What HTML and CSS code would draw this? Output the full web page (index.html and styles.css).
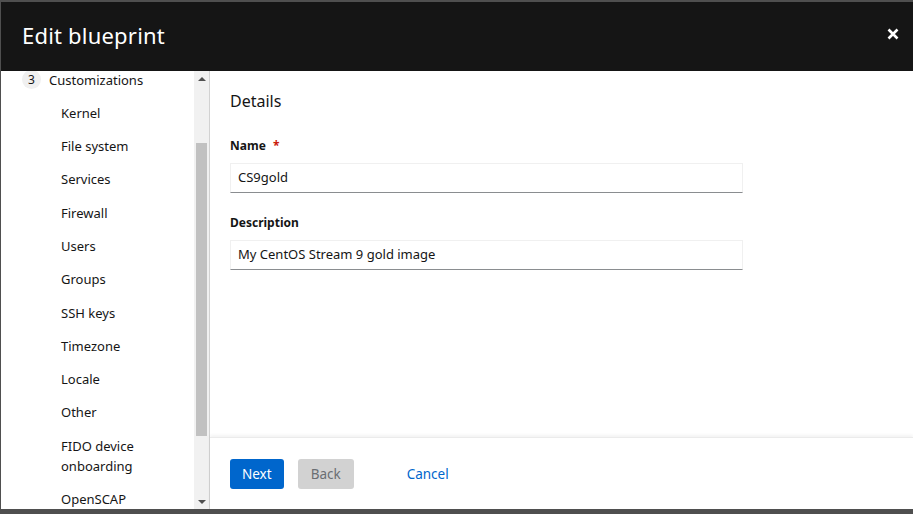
FILE: index.html
```html
<!DOCTYPE html>
<html>
<head>
<meta charset="utf-8">
<link rel="stylesheet" href="styles.css">
</head>
<body>
<div class="backdrop">
  <div class="modal">
    <header class="modal-header">
      <h1 class="title">Edit blueprint</h1>
      <button class="close" aria-label="Close">
        <svg width="12" height="12" viewBox="0 0 12 12"><path d="M1.5 1.5 L10.5 10.5 M10.5 1.5 L1.5 10.5" stroke="#fff" stroke-width="2.6" stroke-linecap="butt"/></svg>
      </button>
    </header>
    <div class="modal-body">
      <nav class="wizard-nav">
        <div class="nav-scroll">
          <ul class="nav-list">
            <li class="nav-step"><span class="step-num">3</span><span>Customizations</span></li>
            <li class="nav-sub">Kernel</li>
            <li class="nav-sub">File system</li>
            <li class="nav-sub">Services</li>
            <li class="nav-sub">Firewall</li>
            <li class="nav-sub">Users</li>
            <li class="nav-sub">Groups</li>
            <li class="nav-sub">SSH keys</li>
            <li class="nav-sub">Timezone</li>
            <li class="nav-sub">Locale</li>
            <li class="nav-sub">Other</li>
            <li class="nav-sub">FIDO device<br>onboarding</li>
            <li class="nav-sub">OpenSCAP</li>
          </ul>
        </div>
        <div class="scrollbar">
          <div class="arrow up"></div>
          <div class="track"><div class="thumb"></div></div>
          <div class="arrow down"></div>
        </div>
      </nav>
      <section class="main">
        <div class="content">
          <h2 class="section-title">Details</h2>
          <div class="field">
            <label class="label">Name <span class="req">*</span></label>
            <div class="input">CS9gold</div>
          </div>
          <div class="field">
            <label class="label">Description</label>
            <div class="input">My CentOS Stream 9 gold image</div>
          </div>
        </div>
        <footer class="footer">
          <button class="btn primary">Next</button>
          <button class="btn disabled">Back</button>
          <button class="btn link">Cancel</button>
        </footer>
      </section>
    </div>
  </div>
</div>
</body>
</html>
```
FILE: styles.css
```css
* { box-sizing: border-box; }
html, body { margin: 0; padding: 0; }
body {
  width: 913px;
  height: 514px;
  overflow: hidden;
  background: #4f4f4f;
  font-family: "Noto Sans", "Open Sans", sans-serif;
  color: #151515;
}
.backdrop {
  height: 514px;
  padding: 2px 0 5px 1px;
  display: flex;
}
.modal {
  flex: 1;
  display: flex;
  flex-direction: column;
  background: #fff;
}
.modal-header {
  height: 69px;
  background: #151515;
  display: flex;
  align-items: center;
  justify-content: space-between;
  padding: 0 14px 0 21px;
  flex-shrink: 0;
}
.title {
  margin: 0;
  color: #fff;
  font-family: "Noto Sans", sans-serif;
  font-weight: 400;
  font-size: 22px;
  letter-spacing: 0.2px;
  position: relative;
  top: -2px;
}
.close {
  background: none;
  border: 0;
  padding: 0;
  width: 12px;
  height: 12px;
  display: flex;
  position: relative;
  top: -3px;
}
.modal-body {
  flex: 1;
  display: flex;
  min-height: 0;
}
.wizard-nav {
  width: 209px;
  display: flex;
  border-right: 1px solid #d2d2d2;
  flex-shrink: 0;
}
.nav-scroll {
  flex: 1;
  overflow: hidden;
}
.nav-list {
  list-style: none;
  margin: -8px 0 0;
  padding: 0;
  font-size: 13px;
  line-height: 20px;
}
.nav-step {
  display: flex;
  align-items: center;
  gap: 8px;
  padding: 6.6px 0 6.6px 21px;
}
.step-num {
  width: 19px;
  height: 19px;
  border-radius: 50%;
  background: #f0f0f0;
  display: flex;
  align-items: center;
  justify-content: center;
  font-size: 12px;
}
.nav-sub {
  padding: 6.65px 0 6.65px 60px;
}
.scrollbar {
  width: 15px;
  background: #f1f1f1;
  display: flex;
  flex-direction: column;
}
.arrow {
  height: 15px;
  display: flex;
  align-items: center;
  justify-content: center;
}
.arrow::before {
  content: "";
  border-left: 4px solid transparent;
  border-right: 4px solid transparent;
}
.arrow.up::before { border-bottom: 4px solid #505050; }
.arrow.down::before { border-top: 4px solid #505050; }
.track {
  flex: 1;
  padding: 57px 2px 58px;
  display: flex;
}
.thumb {
  flex: 1;
  background: #c1c1c1;
}
.main {
  flex: 1;
  display: flex;
  flex-direction: column;
  min-width: 0;
}
.content {
  flex: 1;
  padding: 18px 20px 0;
}
.section-title {
  margin: 0 0 24px;
  font-size: 16px;
  font-weight: 400;
  line-height: 24px;
}
.field { margin-bottom: 21px; }
.label {
  display: block;
  font-size: 12px;
  font-weight: 700;
  line-height: 18px;
  margin-bottom: 8px;
}
.req { color: #c9190b; margin-left: 4px; }
.input {
  width: 513px;
  height: 30px;
  border: 1px solid #f0f0f0;
  border-bottom-color: #8a8d90;
  padding: 0 7px;
  font-size: 13px;
  line-height: 27px;
}
.footer {
  height: 72px;
  flex-shrink: 0;
  border-top: 1px solid #ebebeb;
  box-shadow: 0 -2px 3px rgba(0,0,0,0.05);
  display: flex;
  align-items: flex-start;
  padding: 21px 20px 0;
  gap: 14px;
}
.btn {
  font-family: inherit;
  font-size: 13.5px;
  height: 30px;
  border: 0;
  border-radius: 3px;
  padding: 0 12px;
  line-height: 30px;
}
.primary { background: #0066cc; color: #fff; }
.disabled { background: #d2d2d2; color: #6a6e73; padding: 0 13px; margin-right: 25px; }
.link { background: none; color: #0066cc; padding: 0 14px; }
```
